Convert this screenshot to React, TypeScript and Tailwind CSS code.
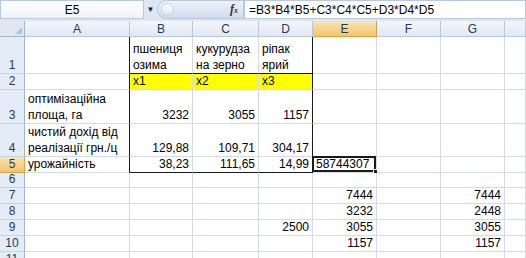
import React from 'react';

type Cell = { t?: React.ReactNode; r?: boolean; y?: boolean };

const cols = ['A', 'B', 'C', 'D', 'E', 'F', 'G', ''];
const heights = [
  'h-[37px]', 'h-[16px]', 'h-[34px]', 'h-[33px]', 'h-[16px]', 'h-[15px]',
  'h-[16px]', 'h-[16px]', 'h-[16px]', 'h-[16px]', 'h-[16px]',
];

const two = (a: string, b: string) => (
  <span>
    {a}
    <br />
    {b}
  </span>
);

// rows 1..11, columns A..H
const data: Cell[][] = [
  [{}, { t: two('пшениця', 'озима') }, { t: two('кукурудза', 'на зерно') }, { t: two('ріпак', 'ярий') }],
  [{}, { t: 'x1', y: true }, { t: 'x2', y: true }, { t: 'x3', y: true }],
  [{ t: two('оптимізаційна', 'площа, га') }, { t: '3232', r: true }, { t: '3055', r: true }, { t: '1157', r: true }],
  [{ t: two('чистий дохід від', 'реалізації грн./ц') }, { t: '129,88', r: true }, { t: '109,71', r: true }, { t: '304,17', r: true }],
  [{ t: 'урожайність' }, { t: '38,23', r: true }, { t: '111,65', r: true }, { t: '14,99', r: true }, { t: '58744307' }],
  [],
  [{}, {}, {}, {}, { t: '7444', r: true }, {}, { t: '7444', r: true }],
  [{}, {}, {}, {}, { t: '3232', r: true }, {}, { t: '2448', r: true }],
  [{}, {}, {}, { t: '2500', r: true }, { t: '3055', r: true }, {}, { t: '3055', r: true }],
  [{}, {}, {}, {}, { t: '1157', r: true }, {}, { t: '1157', r: true }],
  [],
];

function cellClass(row: number, col: number, c: Cell) {
  const inBox = row >= 1 && row <= 5;
  const darkRight = inBox && (col === 0 || col === 3);
  const darkBottom = (row === 1 || row === 5) && col >= 1 && col <= 3;
  let cls = 'relative flex items-end px-[3px] whitespace-nowrap border-r border-b';
  cls += darkRight ? ' border-r-[#1a1a1a]' : ' border-r-[#d4dae6]';
  cls += darkBottom ? ' border-b-[#1a1a1a]' : ' border-b-[#d4dae6]';
  cls += c.r ? ' justify-end' : ' justify-start';
  cls += c.y ? ' bg-[#ffff00]' : ' bg-white';
  return cls;
}

function FormulaBar() {
  return (
    <div className="flex h-[21px] bg-[#dde7f3] pb-[2px]">
      <div className="flex w-[144px] items-center justify-center border border-[#b9c9dd] bg-gradient-to-b from-white to-[#eef2f8] text-[12px] text-black">
        E5
      </div>
      <div className="flex w-[13px] items-center justify-center text-[8px] text-[#222]">▼</div>
      <div className="flex w-[87px] items-center rounded-l-full border border-[#b6c7de] bg-gradient-to-b from-[#edf3fb] to-[#cfdcee]">
        <div className="ml-[3px] h-[13px] w-[13px] rounded-full border border-[#c3d0e2] bg-gradient-to-b from-white to-[#dfe7f2]" />
        <span className="ml-auto mr-[5px] font-['Liberation_Serif',serif] text-[12px] font-bold italic text-[#333]">
          f<span className="text-[8px]">x</span>
        </span>
      </div>
      <div className="flex flex-1 items-center border border-[#b9c9dd] bg-white pl-[4px] text-[12px] text-black">
        =B3*B4*B5+C3*C4*C5+D3*D4*D5
      </div>
    </div>
  );
}

export default function App() {
  return (
    <div className="h-[258px] w-[526px] overflow-hidden bg-white font-['Liberation_Sans',Arial,sans-serif] text-[12px] leading-[16px] text-black">
      <FormulaBar />
      <div className="grid grid-cols-[25px_105px_63px_66px_54px_64px_64px_64px_21px]">
        {/* header row */}
        <div className="relative h-[16px] border-r border-b border-[#9eb6ce] bg-[#dfe7f2]">
          <div className="absolute bottom-[2px] right-[2px] h-0 w-0 border-l-[7px] border-t-[7px] border-l-transparent border-t-transparent border-b-0 border-r-[7px] border-r-[#b5c5da] [border-right-style:solid]" />
        </div>
        {cols.map((c, i) => (
          <div
            key={i}
            className={
              c === 'E'
                ? 'flex h-[16px] items-center justify-center border-r border-b border-r-[#c9a15b] border-b-[#e2a437] bg-gradient-to-b from-[#fbe3b0] to-[#f2c56c] text-[12px] text-[#1e3a5c]'
                : 'flex h-[16px] items-center justify-center border-r border-b border-[#b8c9dc] bg-gradient-to-b from-[#f3f6fb] to-[#e2e9f3] text-[12px] text-[#1e3a5c]'
            }
          >
            {c}
          </div>
        ))}
        {heights.map((h, ri) => {
          const row = ri + 1;
          const cells = data[ri];
          return (
            <React.Fragment key={row}>
              <div
                className={
                  row === 5
                    ? `${h} flex items-end justify-center border-r border-b border-r-[#e2a437] border-b-[#d6a34f] bg-gradient-to-b from-[#fbe3b0] to-[#f2c56c] text-[#1e3a5c]`
                    : `${h} flex items-end justify-center border-r border-b border-r-[#9eb6ce] border-b-[#c5d3e3] bg-[#e4ecf7] text-[#1e3a5c]`
                }
              >
                {row}
              </div>
              {cols.map((_, ci) => {
                const c = cells[ci] || {};
                return (
                  <div key={ci} className={`${h} ${cellClass(row, ci, c)}`}>
                    {c.t}
                    {row === 5 && ci === 4 && (
                      <>
                        <div className="pointer-events-none absolute -left-[1px] -top-[1px] bottom-0 right-0 border-2 border-[#1a1a1a]" />
                        <div className="absolute -bottom-[3px] -right-[3px] h-[6px] w-[6px] border border-white bg-[#1a1a1a]" />
                      </>
                    )}
                  </div>
                );
              })}
            </React.Fragment>
          );
        })}
      </div>
    </div>
  );
}
